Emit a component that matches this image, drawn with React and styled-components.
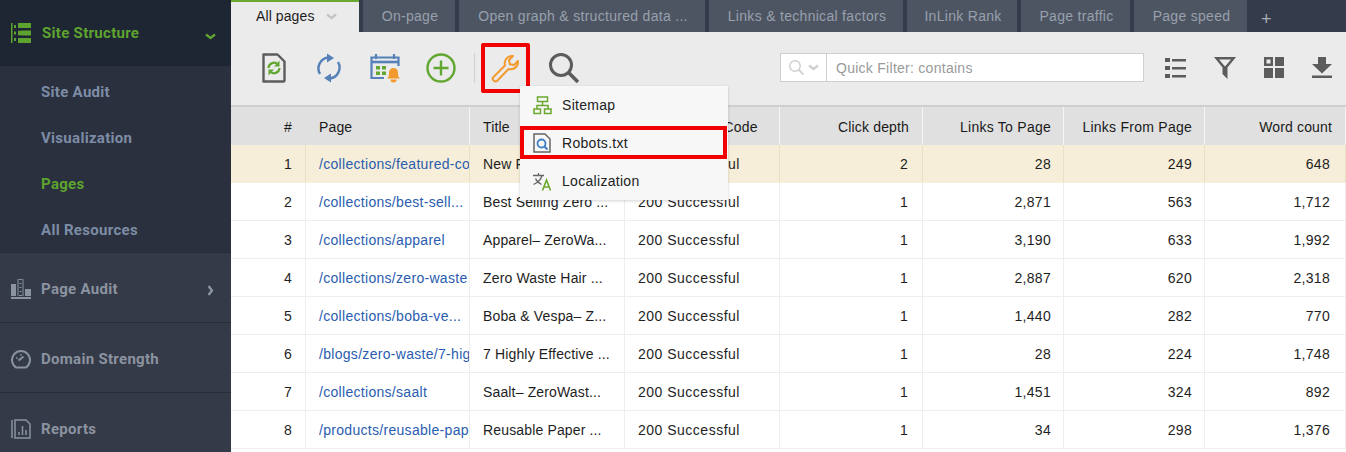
import React from "react";
import styled, { createGlobalStyle } from "styled-components";

const GlobalStyle = createGlobalStyle`
  html, body { margin: 0; padding: 0; height: 100%; overflow: hidden; background: #fff; }
  body { font-family: "Liberation Sans", Arial, sans-serif; font-size: 14px; color: #222; }
`;

const Shell = styled.div`
  display: flex;
  width: 1346px;
  height: 452px;
  overflow: hidden;
`;

/* sidebar */
const Sidebar = styled.aside`
  width: 231px;
  flex: none;
  background: #343a47;
  font-family: Roboto, "Liberation Sans", sans-serif;
  font-weight: 700;
  font-size: 15px;
  letter-spacing: 0.3px;
`;
const OpenSection = styled.div`
  display: flex;
  align-items: center;
  height: 66px;
  padding: 0 15px 0 11px;
  background: #1f2633;
  color: #5ea32f;
`;
const SectionLabel = styled.span`
  flex: 1;
  margin-left: ${(p) => p.$gap || 11}px;
`;
const NavCaret = styled.span`
  display: flex;
  margin: ${(p) => p.$top}px ${(p) => p.$right}px 0 0;
`;
const SubList = styled.div`
  box-sizing: border-box;
  background: #2a303d;
  height: 187px;
  padding-top: 3px;
  border-bottom: 1px solid #272c38;
`;
const SubItem = styled.div`
  height: 46px;
  line-height: 46px;
  padding-left: 41px;
  color: ${(p) => (p.$active ? "#5ea32f" : "#7d8ca6")};
`;
const NavRow = styled.div`
  display: flex;
  align-items: center;
  box-sizing: border-box;
  height: 70px;
  padding: 2px 15px 0 11px;
  color: #8b93a1;
  border-bottom: 1px solid #282d38;
`;

/* main */
const Main = styled.main`
  flex: 1;
  min-width: 0;
  position: relative;
`;
const TabBar = styled.div`
  display: flex;
  height: 32px;
  gap: 4px;
  background: #343b4a;
  letter-spacing: 0.3px;
`;
const Tab = styled.div`
  height: 32px;
  box-sizing: border-box;
  width: ${(p) => p.$w}px;
  padding-left: 2px;
  text-align: center;
  line-height: 32px;
  background: #4d5563;
  color: #98a0ac;
`;
const ActiveTab = styled.div`
  display: flex;
  align-items: center;
  width: 128px;
  height: 32px;
  box-sizing: border-box;
  padding: 0 0 2px 25px;
  border-top: 2px solid #6aa82f;
  background: #ebebeb;
  color: #1c1c1c;
  letter-spacing: 0.1px;
`;
const TabCaret = styled.span`
  display: flex;
  margin-left: 11px;
`;
const AddTab = styled.div`
  color: #a9afb9;
  font-size: 18px;
  line-height: 38px;
  margin-left: 10px;
`;
const Toolbar = styled.div`
  display: flex;
  align-items: center;
  height: 75px;
  box-sizing: border-box;
  padding: 0 0 2px 28px;
  border-bottom: 2px solid #cfcfcf;
  background: #ebebeb;
`;
const ToolButton = styled.div`
  display: flex;
  align-items: center;
  justify-content: center;
  flex: none;
  width: ${(p) => p.$w || 30}px;
  height: 30px;
  margin-right: ${(p) => p.$mr || 0}px;
`;
const Divider = styled.div`
  width: 1px;
  height: 30px;
  background: #cfcfcf;
  margin: 0 6px 0 18px;
`;
const Highlighted = styled.div`
  display: flex;
  align-items: center;
  justify-content: center;
  box-sizing: border-box;
  width: 49px;
  height: 50px;
  border: 4px solid #f00000;
  border-radius: 2px;
  margin-right: 19px;
`;
const FilterBox = styled.div`
  display: flex;
  align-items: center;
  width: 364px;
  height: 29px;
  box-sizing: border-box;
  margin-left: 201px;
  border: 1px solid #cfcfcf;
  background: #fff;
`;
const FilterDrop = styled.div`
  display: flex;
  align-items: center;
  gap: 4px;
  width: 46px;
  height: 100%;
  padding-left: 8px;
  box-sizing: border-box;
  border-right: 1px solid #cfcfcf;
`;
const FilterText = styled.span`
  margin-left: 9px;
  color: #9a9a9a;
  letter-spacing: 0.27px;
`;
const RightTools = styled.div`
  display: flex;
  align-items: center;
  margin-left: 21px;
  gap: 28px;
`;

/* table */
const columns = "74px 164px 155px 155px 143px 141px 141px 142px";
const HeadRow = styled.div`
  display: grid;
  grid-template-columns: ${columns};
  height: 38px;
  background: #e0e0e0;
`;
const BodyRow = styled.div`
  display: grid;
  grid-template-columns: ${columns};
  height: 38px;
  box-sizing: border-box;
  background: ${(p) => (p.$hi ? "#f6eed8" : "#fff")};
  border-bottom: 1px solid ${(p) => (p.$hi ? "#f6eed8" : "#eeeeee")};
`;
const Cell = styled.div`
  padding: 0 ${(p) => (p.$right ? p.$pr || 12 : 0)}px 0 ${(p) => (p.$right ? 0 : 13)}px;
  line-height: 39px;
  letter-spacing: ${(p) => p.$ls || 0.15}px;
  text-align: ${(p) => (p.$right ? "right" : "left")};
  white-space: nowrap;
  overflow: hidden;
  color: ${(p) => (p.$link ? "#2a5db0" : "#1e1e1e")};
  border-left: 1px solid ${(p) => (p.$hi ? "#e8dfc4" : "#eeeeee")};
  &:first-child { border-left: 0; }
  &:last-child { border-right: 1px solid ${(p) => (p.$hi ? "#e8dfc4" : "#eeeeee")}; }
`;
const HeadCell = styled(Cell)`
  line-height: 40px;
  color: #1a1a1a;
  border-left: 1px solid ${(p) => (p.$plain ? "transparent" : "#f5f5f5")};
  &:last-child { border-right: 1px solid #f5f5f5; }
`;

/* tools dropdown */
const Menu = styled.div`
  position: absolute;
  left: 289px;
  top: 86px;
  width: 208px;
  height: 114px;
  background: #f7f7f7;
  box-shadow: 0 1px 3px rgba(0, 0, 0, 0.18);
  letter-spacing: 0.3px;
`;
const MenuItem = styled.div`
  display: flex;
  align-items: center;
  gap: 10px;
  height: 38px;
  padding-left: 13px;
  box-sizing: border-box;
  color: #222;
`;
const MenuMark = styled.div`
  position: absolute;
  left: 0;
  top: 40px;
  width: 207px;
  height: 33px;
  box-sizing: border-box;
  border: 4px solid #f00000;
`;

const SiteIcon = () => (
  <svg width="20" height="20" viewBox="0 0 20 20" fill="#5ea32f">
    <path d="M0 0h1.500v20H0zM3 2h2v3H3zM3 8.500h2v3H3zM3 15h2v3H3zM7 0h13v5H7zM7 7.500h13v5H7zM7 15h13v5H7z" />
    <path d="M7 5h3v2.500H7zM7 12.500h3V15H7z" fill="#1f2633" />
  </svg>
);
const ChevronDown = ({ color = "#5ea32f" }) => (
  <svg width="11" height="7" viewBox="0 0 11 7" fill="none" stroke={color} strokeWidth="2.400">
    <path d="M1 1.500l4.500 3.500 4.500-3.500" />
  </svg>
);
const ChevronRight = () => (
  <svg width="7" height="11" viewBox="0 0 7 11" fill="none" stroke="#8b93a1" strokeWidth="2.400">
    <path d="M1.500 1l3.500 4.500-3.500 4.500" />
  </svg>
);
const AuditIcon = () => (
  <svg width="20" height="20" viewBox="0 0 20 20" fill="#8b93a1">
    <path d="M0 5h5v12H0zM6.500 0h1v17h-1zM11.500 0h1v17h-1zM8 0h3v1H8zM8 16h3v1H8zM14 10h6v7h-6zM0 18h20v2H0z" />
    <path d="M8.500 4h2v1h-2zM8.500 8h2v1h-2zM8.500 12h2v1h-2z" />
  </svg>
);
const GaugeIcon = () => (
  <svg width="20" height="20" viewBox="0 0 20 20" fill="none" stroke="#8b93a1">
    <path d="M5 18.500a9 9 0 1 1 10 0z" strokeWidth="2" />
    <path d="M7.500 11.500l5-4" strokeWidth="2" />
    <path d="M5 9h1.500M10 5v1.500" strokeWidth="1.500" />
  </svg>
);
const ReportIcon = () => (
  <svg width="20" height="20" viewBox="0 0 20 20" fill="none" stroke="#8b93a1">
    <path d="M1 1v18" strokeWidth="1.500" />
    <path d="M4 1h11l4 4v14H4z" strokeWidth="1.500" />
    <path d="M8 16v-3M11.500 16V7M15 16v-5" strokeWidth="1.500" />
  </svg>
);
const PageRefreshIcon = () => (
  <svg width="24" height="30" viewBox="0 0 24 30" fill="none">
    <path d="M1.500 1.500h14l7 7v19a1 1 0 0 1-1 1h-20z" stroke="#5c5c5c" strokeWidth="2.400" strokeLinejoin="round" />
    <path d="M6.500 15a5.500 5.500 0 0 1 9.500-3.500M17.500 15a5.500 5.500 0 0 1-9.500 3.500" stroke="#63a733" strokeWidth="2.200" />
    <path d="M17.500 7.500v6h-5.500zM6.500 22.500v-6h5.500z" fill="#63a733" />
  </svg>
);
const RefreshIcon = () => (
  <svg width="26" height="30" viewBox="0 0 26 30" fill="none">
    <path d="M4 21a11 11 0 0 1 8-16.500M22 9a11 11 0 0 1-8 16.500" stroke="#5581b8" strokeWidth="2.400" />
    <path d="M11 0.500l7 4.500-7 4.500zM15 20.500l-7 4.500 7 4.500z" fill="#5581b8" />
  </svg>
);
const CalendarIcon = () => (
  <svg width="30" height="30" viewBox="0 0 30 30" fill="none">
    <path d="M14 25H1.500V4.500h27V13" stroke="#5581b8" strokeWidth="2.200" />
    <path d="M1 9h28" stroke="#5581b8" strokeWidth="2.600" />
    <path d="M6 1v5M24 1v5" stroke="#5581b8" strokeWidth="2.200" />
    <path d="M6 13h4v3.500H6zM12 13h4v3.500h-4zM6 18.500h4V22H6zM12 18.500h4V22h-4z" fill="#63a733" />
    <path d="M17 25.500c2-1.500 2-3 2-6a4.500 4.500 0 0 1 9 0c0 3 0 4.500 2 6z" fill="#f39a2e" />
    <path d="M20.500 26.500a3 3 0 0 0 6 0h-6z" fill="#f39a2e" />
  </svg>
);
const PlusIcon = () => (
  <svg width="30" height="30" viewBox="0 0 30 30" fill="none" stroke="#63a733" strokeWidth="2.400">
    <circle cx="15" cy="15" r="13.500" />
    <path d="M15 7.500v15M7.500 15h15" />
  </svg>
);
const WrenchIcon = () => (
  <svg width="30" height="30" viewBox="0 0 30 30" fill="none" stroke="#f39a2e" strokeWidth="2" strokeLinejoin="round">
    <path d="M2 24.500L14 12.500c-1.500-5 2.500-10 8-9.500l-4 4 .8 4.200 4.200.8 4-4c.5 5.500-4.500 9.500-9.500 8L6 28c-2 1.500-5.500-1.500-4-3.500z" />
  </svg>
);
const SearchIcon = ({ size = 30, color = "#5c5c5c", w = 3 }) => (
  <svg width={size} height={size} viewBox="0 0 30 30" fill="none" stroke={color} strokeWidth={w}>
    <circle cx="12" cy="12" r="10.500" />
    <path d="M19.500 19.500L29 29" strokeWidth={w + 0.6} />
  </svg>
);
const ListIcon = () => (
  <svg width="21" height="20" viewBox="0 0 21 20" fill="#5c5c5c">
    <path d="M0 0h5v4H0zM7 1h14v2.500H7zM0 8h5v4H0zM7 9h14v2.500H7zM0 16h5v4H0zM7 17h14v2.500H7z" />
  </svg>
);
const FunnelIcon = () => (
  <svg width="22" height="22" viewBox="0 0 22 22">
    <path d="M0 0h22L13.500 10.500V22L8.500 17v-6.500z" fill="#5c5c5c" />
    <path d="M5 2.500h12L11 9.500z" fill="#ebebeb" />
  </svg>
);
const GridIcon = () => (
  <svg width="20" height="21" viewBox="0 0 20 21" fill="#5c5c5c">
    <path d="M0 0h9v9H0zM11 0h9v9h-9zM0 11h9v10H0zM11 11h9v10h-9z" />
    <path d="M2.500 2.500h4v4h-4z" fill="#ebebeb" />
  </svg>
);
const DownloadIcon = () => (
  <svg width="20" height="21" viewBox="0 0 20 21" fill="#5c5c5c">
    <path d="M6 0h8v7h6l-10 9.500L0 7h6zM0 18.500h20V21H0z" />
  </svg>
);
const SitemapIcon = () => (
  <svg width="19" height="19" viewBox="0 0 19 19" fill="none" stroke="#6aa82f" strokeWidth="1.500">
    <path d="M4.500 1h10v4.500h-10zM1 13h6.500v4.500H1zM11.500 13H18v4.500h-6.500z" />
    <path d="M9.500 5.500V9.500M4 13V9.500h11V13" />
  </svg>
);
const RobotsIcon = () => (
  <svg width="19" height="20" viewBox="0 0 19 20" fill="none">
    <path d="M1 1h11l5 5v13H1z" stroke="#666" strokeWidth="1.500" />
    <circle cx="8.500" cy="10.500" r="4" stroke="#3f7fc4" strokeWidth="1.800" />
    <path d="M11.500 13.500l3 3" stroke="#3f7fc4" strokeWidth="2" />
  </svg>
);
const LocalizeIcon = () => (
  <svg width="19" height="19" viewBox="0 0 19 19" fill="none">
    <path d="M0 3.500h11M5.500 1v2.500M9 3.500c-1 4-4 7-8.500 9M2.500 6.500c1 2.500 3 4.500 6 6" stroke="#666" strokeWidth="1.300" />
    <path d="M9.500 18.500L13.500 8l4 10.500M11 15h5" stroke="#6aa82f" strokeWidth="1.600" />
  </svg>
);

const tabs = [
  ["On-page", 92],
  ["Open graph & structured data ...", 246],
  ["Links & technical factors", 194],
  ["InLink Rank", 110],
  ["Page traffic", 109],
  ["Page speed", 113],
];

const rows = [
  [1, "/collections/featured-collection", "New Featured Coll...", "200 Successful", "2", "28", "249", "648"],
  [2, "/collections/best-sell...", "Best Selling Zero ...", "200 Successful", "1", "2,871", "563", "1,712"],
  [3, "/collections/apparel", "Apparel– ZeroWa...", "200 Successful", "1", "3,190", "633", "1,992"],
  [4, "/collections/zero-waste", "Zero Waste Hair ...", "200 Successful", "1", "2,887", "620", "2,318"],
  [5, "/collections/boba-ve...", "Boba & Vespa– Z...", "200 Successful", "1", "1,440", "282", "770"],
  [6, "/blogs/zero-waste/7-highly-effective", "7 Highly Effective ...", "200 Successful", "1", "28", "224", "1,748"],
  [7, "/collections/saalt", "Saalt– ZeroWast...", "200 Successful", "1", "1,451", "324", "892"],
  [8, "/products/reusable-paper", "Reusable Paper ...", "200 Successful", "1", "34", "298", "1,376"],
];

export default function App() {
  return (
    <Shell>
      <GlobalStyle />
      <Sidebar>
        <OpenSection>
          <SiteIcon />
          <SectionLabel>Site Structure</SectionLabel>
          <NavCaret $top={6} $right={0}><ChevronDown /></NavCaret>
        </OpenSection>
        <SubList>
          <SubItem>Site Audit</SubItem>
          <SubItem>Visualization</SubItem>
          <SubItem $active>Pages</SubItem>
          <SubItem>All Resources</SubItem>
        </SubList>
        <NavRow>
          <AuditIcon />
          <SectionLabel $gap={10}>Page Audit</SectionLabel>
          <NavCaret $top={3} $right={2}><ChevronRight /></NavCaret>
        </NavRow>
        <NavRow>
          <GaugeIcon />
          <SectionLabel $gap={10}>Domain Strength</SectionLabel>
        </NavRow>
        <NavRow>
          <ReportIcon />
          <SectionLabel $gap={10}>Reports</SectionLabel>
        </NavRow>
      </Sidebar>

      <Main>
        <TabBar>
          <ActiveTab>
            All pages
            <TabCaret>
              <ChevronDown color="#c4c4c4" />
            </TabCaret>
          </ActiveTab>
          {tabs.map(([name, w]) => (
            <Tab key={name} $w={w}>{name}</Tab>
          ))}
          <AddTab>+</AddTab>
        </TabBar>

        <Toolbar>
          <ToolButton $mr={25}><PageRefreshIcon /></ToolButton>
          <ToolButton $mr={26}><RefreshIcon /></ToolButton>
          <ToolButton $mr={26}><CalendarIcon /></ToolButton>
          <ToolButton><PlusIcon /></ToolButton>
          <Divider />
          <Highlighted><WrenchIcon /></Highlighted>
          <ToolButton><SearchIcon /></ToolButton>
          <FilterBox>
            <FilterDrop>
              <SearchIcon size={15} color="#d0d0d0" w={3} />
              <ChevronDown color="#d0d0d0" />
            </FilterDrop>
            <FilterText>Quick Filter: contains</FilterText>
          </FilterBox>
          <RightTools>
            <ListIcon />
            <FunnelIcon />
            <GridIcon />
            <DownloadIcon />
          </RightTools>
        </Toolbar>

        <HeadRow>
          <HeadCell $right $pr={13}>#</HeadCell>
          <HeadCell $plain>Page</HeadCell>
          <HeadCell>Title</HeadCell>
          <HeadCell $plain>HTTP Status Code</HeadCell>
          <HeadCell $right $pr={13}>Click depth</HeadCell>
          <HeadCell $right $ls={0.25}>Links To Page</HeadCell>
          <HeadCell $right $ls={0.25}>Links From Page</HeadCell>
          <HeadCell $right $pr={13}>Word count</HeadCell>
        </HeadRow>
        {rows.map((r, i) => (
          <BodyRow key={r[0]} $hi={i === 0}>
            <Cell $right $pr={13}>{r[0]}</Cell>
            <Cell $link $hi={i === 0} $ls={0.3}>{r[1]}</Cell>
            <Cell $hi={i === 0}>{r[2]}</Cell>
            <Cell $hi={i === 0} $ls={0.5}>{r[3]}</Cell>
            <Cell $right $hi={i === 0} $pr={14}>{r[4]}</Cell>
            <Cell $right $hi={i === 0} $ls={0.3}>{r[5]}</Cell>
            <Cell $right $hi={i === 0} $ls={0.3}>{r[6]}</Cell>
            <Cell $right $hi={i === 0} $pr={15} $ls={0.3}>{r[7]}</Cell>
          </BodyRow>
        ))}

        <Menu>
          <MenuItem><SitemapIcon />Sitemap</MenuItem>
          <MenuItem><RobotsIcon />Robots.txt</MenuItem>
          <MenuItem><LocalizeIcon />Localization</MenuItem>
          <MenuMark />
        </Menu>
      </Main>
    </Shell>
  );
}
